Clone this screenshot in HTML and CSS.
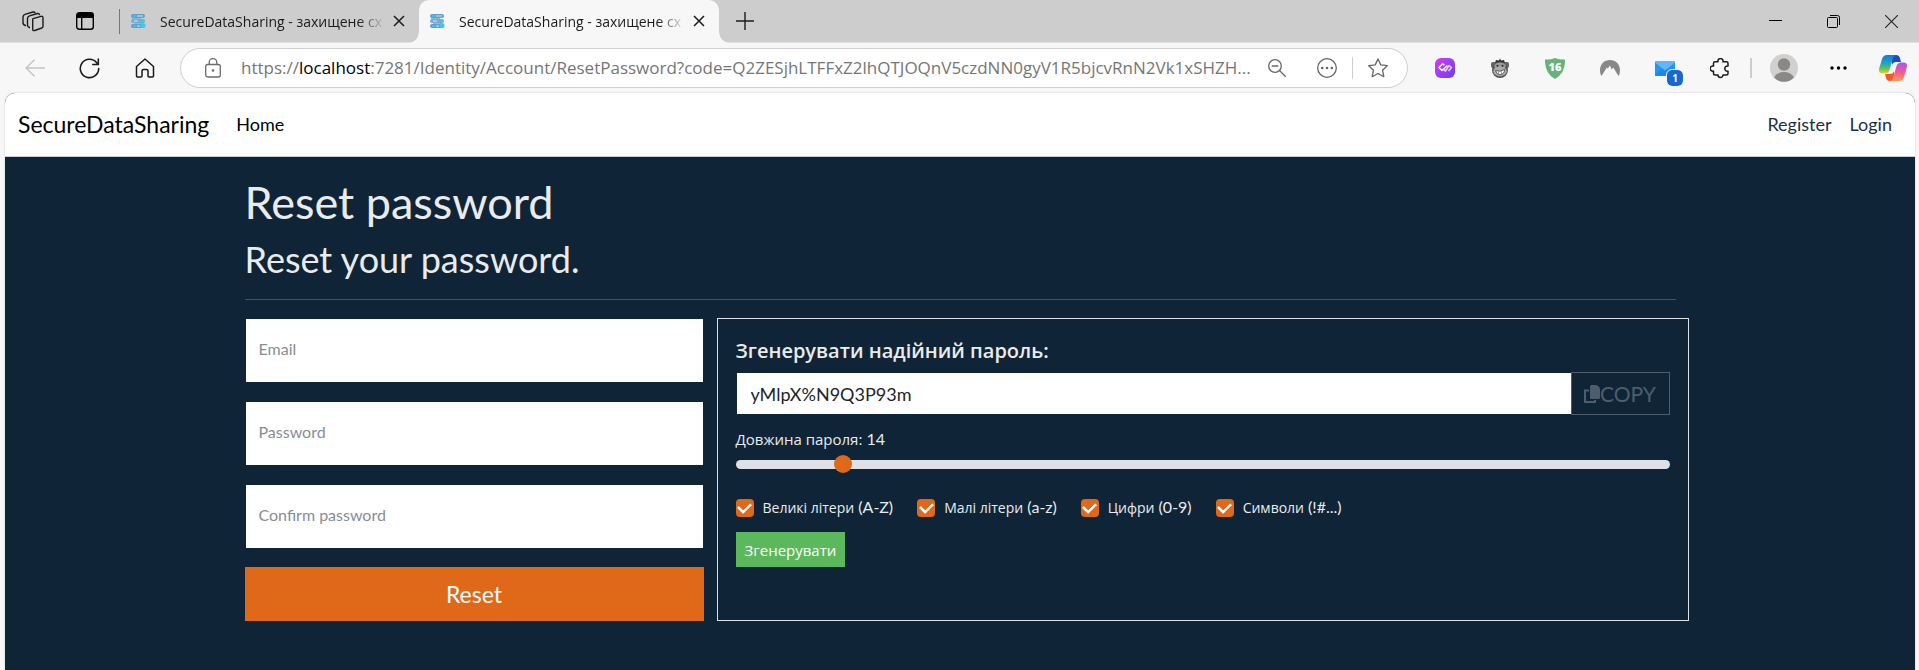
FILE: index.html
```html
<!DOCTYPE html>
<html lang="uk">
<head>
<meta charset="utf-8">
<meta name="viewport" content="width=device-width, initial-scale=1">
<title>SecureDataSharing - Reset password</title>
<link rel="stylesheet" href="styles.css">
</head>
<body>
<svg class="sprite" width="0" height="0" aria-hidden="true">
  <symbol id="favicon" viewBox="0 0 16 16">
    <rect x="1" y="1" width="14" height="4" rx="2" fill="#5f9fd0"/>
    <rect x="1" y="6" width="14" height="4" rx="2" fill="#7aa9d2"/>
    <rect x="1" y="11" width="14" height="4" rx="2" fill="#5f9fd0"/>
    <path d="M2 5.500h9M4 10.500h9" stroke="#8fb8da"/>
    <path d="M3 3h3M10 8h3M3 13h3" stroke="#35cdf5" stroke-width="1.500"/>
    <path d="M7 3h6M4 8h4M7 13h3" stroke="#d5e4f0" stroke-width="1"/>
    <circle cx="13" cy="12.500" r="2.500" fill="#35cdf5"/>
  </symbol>
  <symbol id="cross" viewBox="0 0 12 12">
    <path d="M1 1l10 10M11 1L1 11" fill="none" stroke="currentColor" stroke-width="1.500"/>
  </symbol>
</svg>

<header class="browser">
  <div class="tabstrip">
    <button class="icon-btn workspace-btn" aria-label="Workspaces">
      <svg width="22" height="22" viewBox="0 0 22 22" fill="none" stroke="#1b1b1b" stroke-width="1.400" stroke-linejoin="round" stroke-linecap="round">
        <path d="M11 8.700l8-2.300q2-.5 2 1.300v8.500q0 1.300-1.300 1.800l-7 2.500q-2 .6-2-1.300v-8.800q0-1.300.3-1.700z"/>
        <path d="M7.500 17.500Q5.500 17 5.500 15V8.500q0-2 2-2.600l8-2.400q1.500-.3 2 1"/>
        <path d="M3.500 15.500Q1 15 1 12.500V7q0-2 2-2.600l8-2.400q1.500-.3 2 .7"/>
      </svg>
    </button>
    <button class="icon-btn layout-btn" aria-label="Tab actions">
      <svg width="18" height="18" viewBox="0 0 18 18">
        <rect x=".7" y=".7" width="16.600" height="16.600" rx="2.500" fill="none" stroke="#000" stroke-width="1.400"/>
        <path d="M1 6V3q0-2 2-2h12q2 0 2 2v3z"/>
        <path d="M5.700 6v11" stroke="#000" stroke-width="1.400"/>
      </svg>
    </button>
    <span class="strip-divider"></span>
    <div class="tab">
      <svg class="favicon" width="16" height="16"><use href="#favicon"/></svg>
      <span class="tab-title">SecureDataSharing - захищене сх</span>
      <button class="icon-btn" aria-label="Close tab"><svg width="12" height="12"><use href="#cross"/></svg></button>
    </div>
    <div class="tab tab-active">
      <svg class="favicon" width="16" height="16"><use href="#favicon"/></svg>
      <span class="tab-title">SecureDataSharing - захищене сх</span>
      <button class="icon-btn" aria-label="Close tab"><svg width="12" height="12"><use href="#cross"/></svg></button>
    </div>
    <button class="icon-btn new-tab" aria-label="New tab">
      <svg width="18" height="18" viewBox="0 0 18 18"><path d="M9 0v18M0 9h18" stroke="#1b1b1b" stroke-width="1.400"/></svg>
    </button>
    <div class="window-controls">
      <button class="icon-btn" aria-label="Minimize"><svg width="13" height="13" viewBox="0 0 13 13"><path d="M0 5.500h13" stroke="#000"/></svg></button>
      <button class="icon-btn" aria-label="Restore"><svg width="13" height="13" viewBox="0 0 13 13" fill="none" stroke="#000"><rect x=".5" y="2.500" width="10" height="10" rx="1"/><path d="M3 .5h7.500q2 0 2 2V10"/></svg></button>
      <button class="icon-btn" aria-label="Close"><svg width="13" height="13" viewBox="0 0 13 13"><path d="M0 0l13 13M13 0L0 13" stroke="#222" stroke-width="1.100"/></svg></button>
    </div>
  </div>

  <div class="toolbar">
    <button class="icon-btn" aria-label="Back">
      <svg width="20" height="18" viewBox="0 0 20 18" fill="none" stroke="#c4c4c4" stroke-width="1.400"><path d="M20 9H1M9.500 .7L1 9l8.500 8.300"/></svg>
    </button>
    <button class="icon-btn refresh-btn" aria-label="Refresh">
      <svg width="21" height="21" viewBox="0 0 21 21" fill="none" stroke="#1b1b1b" stroke-width="1.600" stroke-linecap="round"><path d="M19.700 10.500a9.200 9.200 0 1 1-2-5.800l1.300 1.500M19.300 1v5.500h-5.500"/></svg>
    </button>
    <button class="icon-btn home-btn" aria-label="Home page">
      <svg width="20" height="20" viewBox="0 0 20 20" fill="none" stroke="#1b1b1b" stroke-width="1.500" stroke-linejoin="round"><path d="M1.500 8.500L10 1l8.500 7.500V18q0 1-1 1H14q-1 0-1-1v-5q0-1.500-1.500-1.500h-3Q7 11.500 7 13v5q0 1-1 1H2.500q-1 0-1-1z"/></svg>
    </button>
    <div class="address">
      <svg width="16" height="20" viewBox="0 0 16 20" fill="none" stroke="#6b6b6b" stroke-width="1.300"><rect x=".7" y="6.500" width="14.600" height="12.500" rx="2"/><path d="M4.200 6.500V4.500a3.800 3.800 0 0 1 7.600 0v2"/><circle cx="8" cy="12.500" r="1.300" fill="#6b6b6b" stroke="none"/></svg>
      <span class="url">https://<b>localhost</b>:7281/Identity/Account/ResetPassword?code=Q2ZESjhLTFFxZ2lhQTJOQnV5czdNN0gyV1R5bjcvRnN2Vk1xSHZH...</span>
      <div class="address-tools">
        <svg width="18" height="18" viewBox="0 0 18 18" fill="none" stroke="#666" stroke-width="1.300" stroke-linecap="round"><circle cx="7" cy="7" r="6.300"/><path d="M4.200 7h5.600M11.500 11.500l6 6"/></svg>
        <svg width="20" height="20" viewBox="0 0 20 20"><circle cx="10" cy="10" r="9.300" fill="none" stroke="#666" stroke-width="1.300"/><g fill="#666"><circle cx="5.200" cy="10" r="1.300"/><circle cx="10" cy="10" r="1.300"/><circle cx="14.800" cy="10" r="1.300"/></g></svg>
        <span class="address-divider"></span>
        <svg width="20" height="20" viewBox="0 0 20 20" fill="none" stroke="#666" stroke-width="1.300" stroke-linejoin="round"><path d="M10 1l2.800 5.900 6.500.8-4.800 4.500 1.300 6.500L10 15.500l-5.800 3.200 1.300-6.500L.7 7.700l6.500-.8z"/></svg>
      </div>
    </div>
    <div class="extensions">
      <button class="icon-btn" aria-label="Extension: loop">
        <svg width="20" height="20" viewBox="0 0 20 20"><defs><linearGradient id="violet" x1="0" y1="0" x2="1" y2="1"><stop offset="0" stop-color="#d63df5"/><stop offset="1" stop-color="#6a3df0"/></linearGradient></defs><rect width="20" height="20" rx="6" fill="url(#violet)"/><path d="M9.500 7L7.500 6 4 9.500 7 12.500 12.500 7.500" fill="none" stroke="#fff" stroke-width="1.600" stroke-linejoin="round"/><path d="M8.500 11.500l2 1.500 3.500-5.500 2.500 2-3 3.500" fill="none" stroke="#e3c8ff" stroke-width="1.600" stroke-linejoin="round"/></svg>
      </button>
      <button class="icon-btn" aria-label="Extension: monkey">
        <svg width="20" height="20" viewBox="-1 0 20 20"><rect y="4" width="6" height="6" rx="2" fill="#666"/><rect x="12" y="4" width="6" height="6" rx="2" fill="#666"/><path d="M4 5l1-3 3 .5L9 .3l1 2.200 3-.5 1 3z" fill="#333"/><ellipse cx="9" cy="12" rx="8" ry="8" fill="#555"/><ellipse cx="9" cy="8" rx="5.800" ry="3.500" fill="#999"/><ellipse cx="9" cy="13.300" rx="6.700" ry="5" fill="#aaa"/><circle cx="6.500" cy="7.800" r="1.100" fill="#333"/><circle cx="11.500" cy="7.800" r="1.100" fill="#333"/><path d="M4.500 12.500q4.500 2 9-1 0 5-4.500 5-3.500 0-4.500-4z" fill="#fff" stroke="#444" stroke-width=".8"/><path d="M7.500 13.500v2.500M10.500 13v3" stroke="#777" stroke-width=".7"/></svg>
      </button>
      <button class="icon-btn badge-host" aria-label="Extension: shield">
        <svg width="20" height="21" viewBox="0 0 20 21"><path d="M10 0q5 2 10 1.500Q20.500 15 10 21-.5 15 0 1.500 5 2 10 0z" fill="#67b279"/></svg>
        <span class="shield-count">16</span>
      </button>
      <button class="icon-btn" aria-label="Extension: VPN">
        <svg width="20" height="16" viewBox="0 0 20 16"><path d="M1.500 16A10.500 10.500 0 0 1 0 10.500C0 4 4.500 0 10 0s10 4 10 10.500A10.500 10.500 0 0 1 18.500 16L13.200 7.500l-1.500 2L10 5.500 7.800 8.500l-1-1z" fill="#8a8886"/></svg>
      </button>
      <button class="icon-btn badge-host" aria-label="Extension: mail">
        <svg width="20" height="15" viewBox="0 0 20 15"><rect width="20" height="15" rx="1.500" fill="#2196f3"/><path d="M0 14L7.500 7.500h5L20 14q0 1-1.500 1h-17Q0 15 0 14z" fill="#1e88e5"/><path d="M0 1.500Q0 0 1.500 0h17Q20 0 20 1.500L10 9.500z" fill="#64b5f6"/></svg>
        <span class="mail-count">1</span>
      </button>
      <button class="icon-btn" aria-label="Extensions">
        <svg width="20" height="21" viewBox="0 0 20 21" fill="none" stroke="#1b1b1b" stroke-width="1.500" stroke-linejoin="round"><path d="M5 3.800h3a2.600 2.600 0 1 1 5 0h3.500q1.500 0 1.500 1.500V8h-.6a2.600 2.600 0 1 0 0 5.200h.6v2.300q0 1.500-1.500 1.500H13a2.500 2.500 0 1 1-5 0H5q-1.500 0-1.500-1.500v-2.400a2.600 2.600 0 1 1 0-5V5.300q0-1.500 1.500-1.500z"/></svg>
      </button>
    </div>
    <span class="toolbar-divider"></span>
    <div class="account-tools">
      <button class="icon-btn" aria-label="Profile">
        <svg width="28" height="28" viewBox="0 0 28 28"><circle cx="14" cy="14" r="14" fill="#d2d0ce"/><circle cx="14" cy="10.500" r="6.200" fill="#8a8886"/><path d="M4 23.500Q7 18 14 18t10 5.500A14 14 0 0 1 4 23.500z" fill="#8a8886"/></svg>
      </button>
      <button class="icon-btn" aria-label="Settings and more">
        <svg width="17" height="4" viewBox="0 0 17 4"><circle cx="2" cy="2" r="1.700"/><circle cx="8.500" cy="2" r="1.700"/><circle cx="15" cy="2" r="1.700"/></svg>
      </button>
      <button class="icon-btn" aria-label="Copilot">
        <svg width="28" height="26" viewBox="0 0 28 26">
          <defs>
            <linearGradient id="cp-a" x1="0" y1="0" x2="0" y2="1"><stop offset="0" stop-color="#1b74e0"/><stop offset=".45" stop-color="#17a8c9"/><stop offset=".75" stop-color="#6cc24a"/><stop offset="1" stop-color="#f5d21b"/></linearGradient>
            <linearGradient id="cp-b" x1="0" y1="0" x2="0" y2="1"><stop offset="0" stop-color="#a855f0"/><stop offset=".5" stop-color="#ef5a92"/><stop offset="1" stop-color="#ff9a55"/></linearGradient>
          </defs>
          <path d="M13 0h4.500q2.500 0 3.300 2.500L22 7h-5q-3 0-4 3z" fill="#1a4fc4"/>
          <path d="M15 26h-4.500Q8 26 7.200 23.500L6 19h5q3 0 4-3z" fill="#ee5a2a"/>
          <path d="M8 0h9q-2 0-3 3l-3.500 12Q9.500 18.500 6 18.500H3.500Q-1 18.500 .3 13L3 4Q4.300 0 8 0z" fill="url(#cp-a)"/>
          <path d="M20 26h-9q2 0 3-3l3.500-12q1-3.500 4.500-3.500h2.500q4.500 0 3.200 5.500L25 22q-1.300 4-5 4z" fill="url(#cp-b)"/>
        </svg>
      </button>
    </div>
  </div>
</header>

<div class="page">
  <nav class="navbar">
    <a class="brand" href="#">SecureDataSharing</a>
    <a class="nav-home" href="#">Home</a>
    <div class="nav-account">
      <a href="#">Register</a>
      <a href="#">Login</a>
    </div>
  </nav>

  <main class="container">
    <h1>Reset password</h1>
    <h2>Reset your password.</h2>
    <hr>
    <div class="row">
      <form class="reset-form">
        <div class="field"><input id="email" type="email"><label for="email">Email</label></div>
        <div class="field"><input id="password" type="password"><label for="password">Password</label></div>
        <div class="field"><input id="confirm" type="password"><label for="confirm">Confirm password</label></div>
        <button class="reset-btn" type="button">Reset</button>
      </form>

      <section class="generator">
        <h3 class="cyr">Згенерувати надійний пароль:</h3>
        <div class="input-group">
          <input type="text" value="yMlpX%N9Q3P93m" aria-label="Згенерований пароль">
          <button class="copy-btn" type="button">
            <svg width="16" height="18" viewBox="0 0 16 18"><path d="M7.500 0H12q4 1 4 5v7.500q0 1.500-1.500 1.500h-7Q6 14 6 12.500v-11Q6 0 7.500 0z" fill="#4e5d6c"/><path d="M5 5.500H1V17h10v-2" fill="none" stroke="#4e5d6c" stroke-width="2"/></svg>
            <span>COPY</span>
          </button>
        </div>
        <label class="length-label" for="length"><span class="cyr">Довжина пароля:</span> 14</label>
        <input class="range" id="length" type="range" min="8" max="64" value="14">
        <div class="checks">
          <label><input type="checkbox" checked><span><span class="cyr">Великі літери</span> (A-Z)</span></label>
          <label><input type="checkbox" checked><span><span class="cyr">Малі літери</span> (a-z)</span></label>
          <label><input type="checkbox" checked><span><span class="cyr">Цифри</span> (0-9)</span></label>
          <label><input type="checkbox" checked><span><span class="cyr">Символи</span> (!#...)</span></label>
        </div>
        <button class="generate-btn cyr" type="button">Згенерувати</button>
      </section>
    </div>
  </main>
</div>
</body>
</html>
```

FILE: styles.css
```css
* { box-sizing: border-box; }

body {
  margin: 0;
  min-height: 100vh;
  display: flex;
  flex-direction: column;
  background: #f7f7f7;
  color: #ebebeb;
  font: 16px/1.5 Lato, "Open Sans", sans-serif;
}

button, input { font-family: inherit; }
a { text-decoration: none; }
.sprite { position: absolute; }
.cyr { font-family: "Open Sans", sans-serif; }

/* Browser frame */
.browser { color: #1b1b1b; font-family: "Open Sans", sans-serif; }

.icon-btn {
  display: flex;
  align-items: center;
  justify-content: center;
  flex: none;
  padding: 0;
  border: 0;
  background: none;
  color: #1b1b1b;
}

.tabstrip {
  display: flex;
  align-items: center;
  height: 43px;
  padding-left: 22px;
  background: #cdcdcd;
  border-bottom: 1px solid #e2e2e2;
}

.layout-btn { margin-left: 32px; }
.strip-divider { width: 1px; height: 25px; margin-left: 25px; background: #777; }

.tab {
  display: flex;
  align-items: center;
  width: 299px;
  height: 43px;
  padding: 0 14px 0 10px;
}

.tab-active {
  position: relative;
  width: 300px;
  background: #f7f7f7;
  border-radius: 10px 10px 0 0;
}

.tab-active::before,
.tab-active::after {
  content: "";
  position: absolute;
  bottom: 0;
  width: 10px;
  height: 10px;
}

.tab-active::before { right: 100%; background: radial-gradient(circle at 0 0, #cdcdcd 9px, #f7f7f7 10px); }
.tab-active::after { left: 100%; background: radial-gradient(circle at 100% 0, #cdcdcd 9px, #f7f7f7 10px); }

.tab-title {
  flex: 1;
  margin: 0 8px 0 14px;
  white-space: nowrap;
  font-size: 14px;
  mask-image: linear-gradient(to right, #000 88%, transparent 100%);
}

.new-tab { margin-left: 17px; }
.window-controls { display: flex; gap: 45px; margin-left: auto; padding-right: 21px; }

.toolbar {
  display: flex;
  align-items: center;
  height: 50px;
  padding: 0 12px 0 25px;
}

.refresh-btn { margin-left: 34px; }
.home-btn { margin-left: 35px; }

.address {
  display: flex;
  flex: 1;
  align-items: center;
  min-width: 0;
  height: 40px;
  margin-left: 25px;
  padding: 0 19px 0 24px;
  border: 1px solid #cfcfcf;
  border-radius: 20px;
  background: #fff;
}

.url {
  flex: 1;
  margin-left: 20px;
  overflow: hidden;
  white-space: nowrap;
  color: #767676;
  font-size: 17px;
}

.url b { color: #000; font-weight: 400; }
.address-tools { display: flex; align-items: center; gap: 31px; }
.address-divider { width: 1px; height: 22px; margin: 0 -16px; background: #cfcfcf; }

.extensions { display: flex; align-items: center; gap: 35px; margin-left: 27px; }
.badge-host { position: relative; }

.shield-count {
  position: absolute;
  inset: 0;
  color: #fff;
  font: 800 11px/18px "Open Sans", sans-serif;
}

.mail-count {
  position: absolute;
  left: 12px;
  top: 9px;
  width: 16px;
  height: 16px;
  border-radius: 5px;
  background: #1967d2;
  color: #fff;
  font: 700 10px/16px "Open Sans", sans-serif;
  outline: 1px solid #f7f7f7;
}

.toolbar-divider { width: 2px; height: 20px; margin-left: 20px; background: #cdcdcd; }
.account-tools { display: flex; align-items: center; gap: 32px; margin-left: 18px; }

/* Site */
.page {
  flex: 1;
  margin: 0 4px 0 5px;
  overflow: hidden;
  border-radius: 10px 10px 0 0;
  background: #0f2537;
  box-shadow: 0 0 2px #c4c4c4;
}

.navbar {
  display: flex;
  align-items: center;
  height: 64px;
  padding: 0 23px 0 13px;
  border-bottom: 1px solid #c8ced4;
  background: #fff;
  font-size: 18px;
}

.navbar a { color: #000; }
.navbar .brand { font-size: 23px; }
.nav-home { margin-left: 27px; }
.nav-account { display: flex; gap: 18px; margin-left: auto; }
.navbar .nav-account a { color: #1c3144; }

.container { max-width: 1431px; margin: 0 auto; padding-top: 18px; }

h1, h2, h3 { margin: 0 0 9px; font-weight: 400; line-height: 1.2; }
h1 { font-size: 45px; }
h2 { font-size: 36px; }
hr { margin: 18px 0; border: 0; border-top: 1px solid #46545e; }

.row {
  display: grid;
  grid-template-columns: 17fr 36fr;
  gap: 13px;
  margin-right: -13px;
}

.reset-form { display: flex; flex-direction: column; justify-content: space-between; }
.field { display: grid; align-items: center; }
.field > * { grid-area: 1 / 1; }

.field input {
  width: 100%;
  height: 65px;
  padding: 0 13px;
  border: 1px solid #0f2537;
  background: #fff;
  font-size: 18px;
}

.field label { padding: 0 0 4px 14px; color: #868e96; font-size: 16px; }

.reset-btn {
  height: 54px;
  border: 0;
  background: #df6919;
  color: #fff;
  font-size: 23px;
}

.generator {
  display: flex;
  flex-direction: column;
  padding: 17px 18px 53px;
  border: 1px solid #dee2e6;
}

.generator h3 { margin-bottom: 7px; font-size: 20px; font-weight: 600; line-height: 29px; }
.input-group { display: flex; height: 43px; }

.input-group input {
  flex: 1;
  min-width: 0;
  padding: 0 14px;
  border: 1px solid #0f2537;
  border-right: 0;
  background: #fff;
  color: #212529;
  font-size: 18px;
}

.copy-btn {
  display: flex;
  align-items: center;
  justify-content: center;
  width: 99px;
  padding: 0;
  border: 1px solid #4e5d6c;
  background: none;
  color: #4e5d6c;
  font-size: 21px;
}

.length-label { margin-top: 12px; line-height: 24px; }

.range {
  appearance: none;
  width: 100%;
  height: 18px;
  margin: 4px 0 22px;
  background: none;
}

.range::-webkit-slider-runnable-track { height: 9px; border-radius: 5px; background: #dee2e6; }

.range::-webkit-slider-thumb {
  appearance: none;
  width: 18px;
  height: 18px;
  margin-top: -5px;
  border-radius: 50%;
  background: #df6919;
}

.checks { display: flex; gap: 24px; }
.checks label { display: flex; align-items: center; gap: 9px; line-height: 24px; }

.checks input {
  appearance: none;
  display: grid;
  place-items: center;
  width: 18px;
  height: 18px;
  margin: 0;
  border-radius: 4px;
  background: #df6919;
}

.checks input::before {
  content: "";
  width: 10px;
  height: 6px;
  margin-bottom: 3px;
  border: solid #fff;
  border-width: 0 0 3px 3px;
  border-radius: 1px;
  rotate: -45deg;
}

.checks .cyr { font-size: 14px; }
.length-label .cyr { font-size: 15px; }

.generate-btn {
  align-self: flex-start;
  height: 35px;
  margin-top: 12px;
  padding: 0 9px;
  border: 0;
  background: #5cb85c;
  color: #fff;
  font-size: 15px;
}
```
